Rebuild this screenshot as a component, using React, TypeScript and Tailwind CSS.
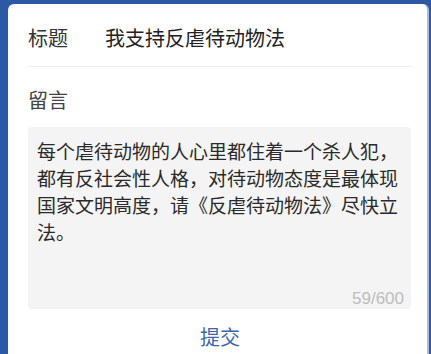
import React from "react";

export default function App() {
  const font = { fontFamily: '"Noto Sans CJK SC", "Noto Sans", sans-serif' };
  return (
    <div className="w-[431px] h-[354px] overflow-hidden bg-[#2b59a3] pt-[4px] pl-[8px] pr-[2px]" style={font}>
      <div className="h-[360px] bg-white rounded-t-[6px] border-r-2 border-[#a9bde2] pl-[20px] pr-[15px]">
        <div className="flex items-center pt-[20px] pb-[14px] border-b border-[#f0f0f0]">
          <div className="w-[77px] text-[20px] leading-[28px] text-[#333]">标题</div>
          <div className="text-[20px] leading-[28px] text-[#222]">我支持反虐待动物法</div>
        </div>
        <div className="pt-[19px] pb-[13px] text-[20px] leading-[28px] text-[#444]">留言</div>
        <div className="h-[182px] w-[383px] rounded-[4px] bg-[#f4f4f4] flex flex-col pl-[9px] pr-[9px] pt-[10px]">
          <div className="text-[19px] leading-[27px] text-[#2a2a2a]">
            每个虐待动物的人心里都住着一个杀人犯，都有反社会性人格，对待动物态度是最体现国家文明高度，请《反虐待动物法》尽快立法。
          </div>
          <div
            className="mt-auto self-end -mr-[2px] text-[17px] leading-[20px] text-[#bdbdbd]"
            style={{ fontFamily: '"Liberation Sans", Arial, sans-serif' }}
          >
            59/600
          </div>
        </div>
        <div className="mt-[14px] text-center text-[20px] leading-[28px] text-[#3b66ad]">提交</div>
      </div>
    </div>
  );
}
